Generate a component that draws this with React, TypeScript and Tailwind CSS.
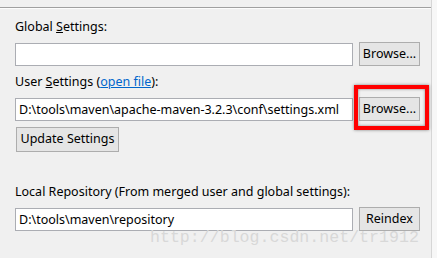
import React from "react";

const font = { fontFamily: '"Noto Sans", "Open Sans", sans-serif' };

function TextBox({ value }: { value?: string }) {
  return (
    <div className="h-[23px] w-[338px] border border-[#abadb3] bg-white pl-[3px] text-[12.5px] leading-[21px] text-black whitespace-nowrap overflow-hidden">
      {value}
    </div>
  );
}

function Button({ label, className = "" }: { label: string; className?: string }) {
  return (
    <div
      className={`flex items-center justify-center border border-[#adadad] bg-[#e5e5e5] text-[12.5px] text-black ${className}`}
    >
      {label}
    </div>
  );
}

export default function App() {
  return (
    <div className="relative flex h-[258px] w-[437px] overflow-hidden bg-[#f0f0f0]" style={font}>
      <div className="flex w-[432px] flex-col border-r border-[#d6d6d6] pt-[7px]">
        <div className="h-px w-full bg-[#a0a0a0]" />
        <div className="h-px w-full bg-[#fcfcfc]" />

        <div className="flex flex-col pl-[15px]">
          <p className="mt-[10px] h-[16px] text-[12.5px] leading-[16px] text-black">
            Global <span className="underline">S</span>ettings:
          </p>
          <div className="mt-[7px] flex h-[24px] items-center gap-[6px]">
            <TextBox />
            <Button label="Browse..." className="h-[24px] w-[61px]" />
          </div>

          <p className="mt-[8px] h-[16px] text-[12.5px] leading-[16px] text-black">
            User <span className="underline">S</span>ettings (
            <span className="text-[#0066cc] underline">open file</span>):
          </p>
          <div className="mt-[7px] flex h-[24px] items-center gap-[6px]">
            <TextBox value="D:\tools\maven\apache-maven-3.2.3\conf\settings.xml" />
            <Button label="Browse..." className="h-[24px] w-[61px]" />
          </div>

          <div className="mt-[6px] flex">
            <Button label="Update Settings" className="ml-px h-[25px] w-[103px]" />
          </div>

          <p className="mt-[32px] h-[16px] text-[12.5px] leading-[16px] text-black">
            Local Repository (From merged user and global settings):
          </p>
          <div className="mt-[7px] flex h-[24px] items-center gap-[6px]">
            <TextBox value="D:\tools\maven\repository" />
            <Button label="Reindex" className="h-[24px] w-[61px]" />
          </div>
        </div>
      </div>
      <div className="flex-1 bg-[#f7f7f7]" />

      {/* highlight box */}
      <div className="absolute left-[354px] top-[85px] h-[45px] w-[75px] border-4 border-[#ff0000] shadow-[0_0_3px_rgba(0,0,0,0.45),inset_0_0_3px_rgba(0,0,0,0.45)]" />

      {/* watermark */}
      <div
        className="pointer-events-none absolute left-[150px] top-[228px] text-[16.6px] leading-[20px] text-[#d8d8d8]"
        style={{ fontFamily: '"Liberation Mono", monospace' }}
      >
        http://blog.csdn.net/tr1912
      </div>
    </div>
  );
}
